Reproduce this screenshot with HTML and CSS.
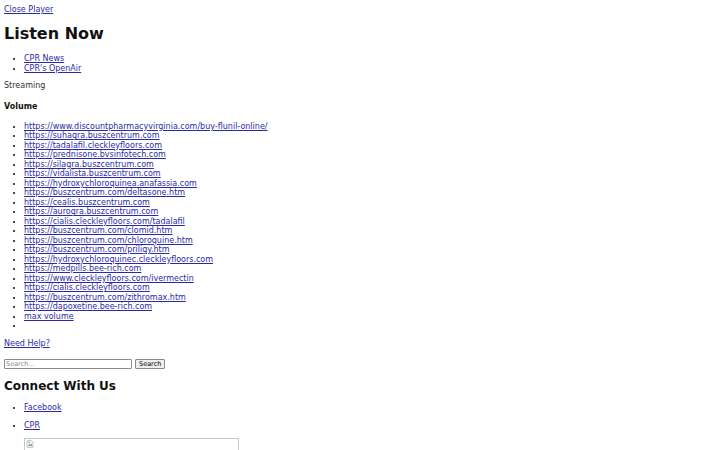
FILE: index.html
```html
<!DOCTYPE html>
<html lang="en">
<head>
    <meta charset="UTF-8">
    <meta name="viewport" content="width=device-width, initial-scale=1.0">
    <title>Listen Now</title>
    <link rel="stylesheet" href="styles.css">
</head>
<body>

<a href="#" class="close-player">Close Player</a>

<div class="player">
    <h1>Listen Now</h1>

    <ul class="stations">
        <li><a href="#">CPR News</a></li>
        <li><a href="#">CPR's OpenAir</a></li>
    </ul>

    <p class="status">Streaming</p>

    <h4 class="volume-title">Volume</h4>
    <ul class="volume-list">
        <li><a href="#">https://www.discountpharmacyvirginia.com/buy-flunil-online/</a></li>
        <li><a href="#">https://suhagra.buszcentrum.com</a></li>
        <li><a href="#">https://tadalafil.cleckleyfloors.com</a></li>
        <li><a href="#">https://prednisone.bvsinfotech.com</a></li>
        <li><a href="#">https://silagra.buszcentrum.com</a></li>
        <li><a href="#">https://vidalista.buszcentrum.com</a></li>
        <li><a href="#">https://hydroxychloroquinea.anafassia.com</a></li>
        <li><a href="#">https://buszcentrum.com/deltasone.htm</a></li>
        <li><a href="#">https://cealis.buszcentrum.com</a></li>
        <li><a href="#">https://aurogra.buszcentrum.com</a></li>
        <li><a href="#">https://cialis.cleckleyfloors.com/tadalafil</a></li>
        <li><a href="#">https://buszcentrum.com/clomid.htm</a></li>
        <li><a href="#">https://buszcentrum.com/chloroquine.htm</a></li>
        <li><a href="#">https://buszcentrum.com/priligy.htm</a></li>
        <li><a href="#">https://hydroxychloroquinec.cleckleyfloors.com</a></li>
        <li><a href="#">https://medpills.bee-rich.com</a></li>
        <li><a href="#">https://www.cleckleyfloors.com/ivermectin</a></li>
        <li><a href="#">https://cialis.cleckleyfloors.com</a></li>
        <li><a href="#">https://buszcentrum.com/zithromax.htm</a></li>
        <li><a href="#">https://dapoxetine.bee-rich.com</a></li>
        <li><a href="#">max volume</a></li>
        <li>&nbsp;</li>
    </ul>
</div>

<p><a href="#">Need Help?</a></p>

<form class="search-form" onsubmit="return false;">
    <input type="text" class="search-input" placeholder="Search...">
    <button type="submit" class="search-btn">Search</button>
</form>

<h2>Connect With Us</h2>
<ul class="social">
    <li><p><a href="#">Facebook</a></p></li>
    <li><p><a href="#">CPR</a></p></li>
    <li><span class="broken-img">
        <svg width="8" height="8" viewBox="0 0 16 16">
            <path d="M2 1h9l3 3v11H2z" fill="#f4f4f4" stroke="#9a9a9a" stroke-width="1"/>
            <path d="M4 12l3-4 2 2 2-3 2 5z" fill="#6aa84f"/>
            <circle cx="6" cy="5" r="1.3" fill="#4a86c5"/>
        </svg>
    </span></li>
</ul>

</body>
</html>
```

FILE: styles.css
```css
body {
    margin: 5px 4px 4px;
    font-family: "DejaVu Sans", sans-serif;
    font-size: 8px;
    line-height: 9.5px;
    color: #111;
}
a {
    color: #2a2aa6;
}
h1 {
    font-size: 16px;
    line-height: 18.6px;
    margin: 10.7px 0;
}
h2 {
    font-size: 12px;
    line-height: 14px;
    margin: 10px 0;
}
p {
    margin: 8px 0;
}
ul {
    margin: 8px 0;
    padding-left: 20px;
}
.status {
    color: #333;
}
.volume-title {
    font-size: 8px;
    margin: 10.6px 0;
}
.search-form {
    display: flex;
    align-items: center;
    gap: 3px;
    padding-top: 3px;
    margin: 0;
}
.search-input {
    width: 128px;
    height: 10px;
    box-sizing: border-box;
    padding: 0 1px;
    border: 1px solid #8a8a8a;
    border-radius: 1px;
    font-family: "DejaVu Sans", sans-serif;
    font-size: 6.5px;
}
.search-input::placeholder {
    color: #8a8a8a;
}
.search-btn {
    height: 10px;
    padding: 0 3px;
    box-sizing: border-box;
    background-color: #efefef;
    border: 1px solid #8a8a8a;
    border-radius: 1px;
    font-family: "DejaVu Sans", sans-serif;
    font-size: 6.5px;
    line-height: 1;
    color: #000;
}
.social li p {
    margin: 8px 0;
}
.broken-img {
    display: inline-block;
    vertical-align: baseline;
    width: 215px;
    height: 40px;
    box-sizing: border-box;
    border: 1px solid #c8c8c8;
    padding: 1px;
}
.broken-img svg {
    display: block;
}
```
